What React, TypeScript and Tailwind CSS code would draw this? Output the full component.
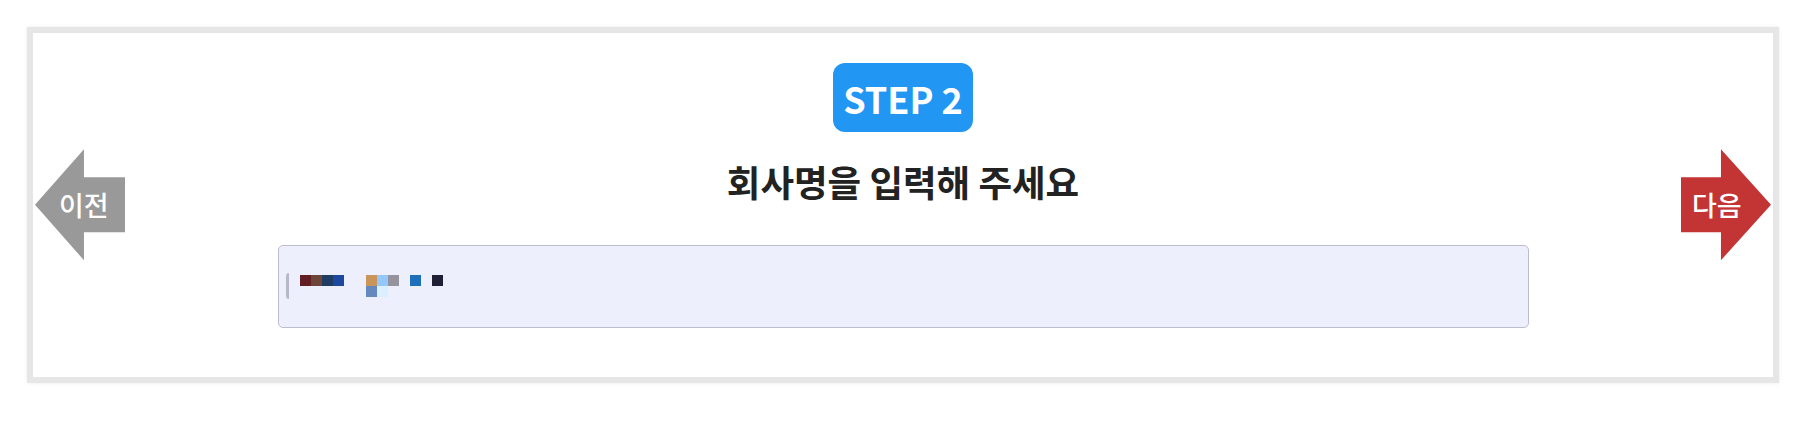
import React from "react";

const cols: (string[] | null)[] = [
  ["#621e22"],
  ["#6d4637"],
  ["#1f3d62"],
  ["#1e47a0"],
  null,
  null,
  ["#c9955a", "#6589bc"],
  ["#94c8fc", "#dbeffe"],
  ["#95939d"],
  null,
  ["#1e6fbb"],
  null,
  ["#1f2035"],
];

export default function App() {
  return (
    <div
      className="w-[1810px] h-[429px] bg-white pt-[27px] pl-[27px]"
      style={{ fontFamily: '"Noto Sans CJK KR", "Noto Sans", sans-serif' }}
    >
      <div className="w-[1752px] border-[6px] border-[#e6e6e6] bg-white shadow-[0_0_4px_rgba(0,0,0,0.08)] flex items-center px-[2px]">
        <button className="w-[90px] h-[111px] shrink-0 bg-[#999999] [clip-path:polygon(0%_50%,54.4%_0%,54.4%_25.2%,100%_25.2%,100%_74.8%,54.4%_74.8%,54.4%_100%)] flex items-center pl-[24px] text-white text-[27px] font-medium leading-none">
          이전
        </button>
        <div className="flex-1 flex flex-col items-center pt-[30px] pb-[49px]">
          <div className="w-[140px] h-[69px] rounded-[12px] bg-[#2196f3] flex items-center justify-center text-white text-[36px] font-bold leading-none">
            STEP 2
          </div>
          <h1 className="mt-[32px] text-[36.5px] font-bold leading-none text-[#222222]">
            회사명을 입력해 주세요
          </h1>
          <div className="mt-[44px] w-[1251px] h-[83px] rounded-[5px] border border-[#bdbdd0] bg-[#eeeffd] flex items-center pl-[7px]">
            <div className="w-[3px] h-[26px] rounded-l-full bg-[#b8b8c8] mr-[11px]" />
            <div className="flex items-start h-[22px]">
              {cols.map((c, i) => (
                <div key={i} className="w-[11px] flex flex-col">
                  {c ? (
                    c.map((color, j) => (
                      <div key={j} className="w-[11px] h-[11px]" style={{ backgroundColor: color }} />
                    ))
                  ) : (
                    <div className="w-[11px] h-[11px]" />
                  )}
                </div>
              ))}
            </div>
          </div>
        </div>
        <button className="w-[90px] h-[111px] shrink-0 bg-[#c33535] [clip-path:polygon(0%_25.2%,44.4%_25.2%,44.4%_0%,100%_50%,44.4%_100%,44.4%_74.8%,0%_74.8%)] flex items-center pl-[11px] text-white text-[27px] font-medium leading-none">
          다음
        </button>
      </div>
    </div>
  );
}
